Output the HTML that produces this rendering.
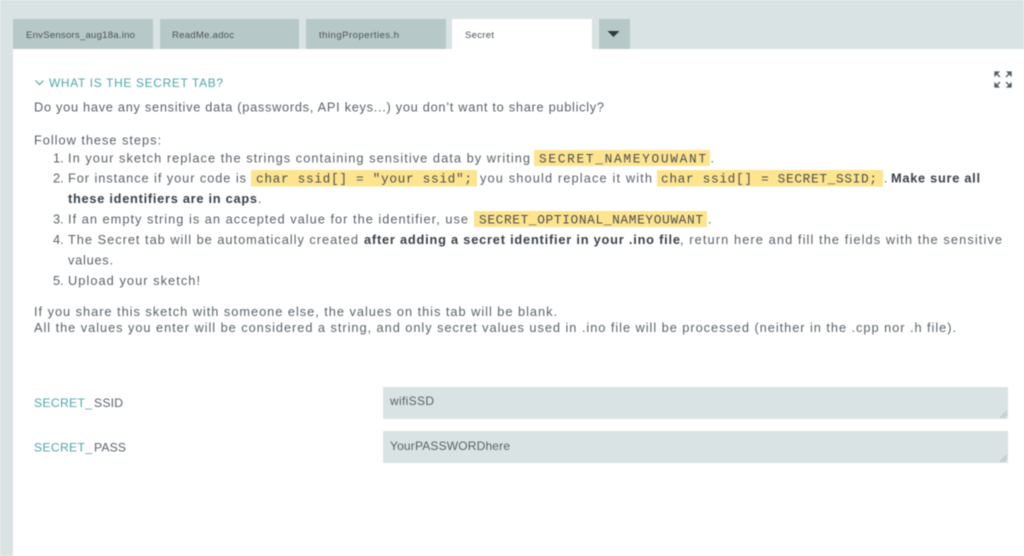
<!DOCTYPE html>
<html><head><meta charset="utf-8"><style>
html,body{margin:0;padding:0;width:1024px;height:556px;overflow:hidden;background:#fff}
svg{display:block;filter:blur(.4px)}
text{font-family:"Liberation Sans",sans-serif;font-size:12.8px;fill:#586369;white-space:pre}
.b{font-weight:700;fill:#374249}
.m{font-family:"Liberation Mono",monospace;font-size:12.8px;fill:#4c5050}
.t{font-size:9.6px;fill:#4a5459}
.l{font-size:12.2px}
.i{font-size:12px}
.h{fill:#fde48f}
.teal{fill:#4fa6a9}
.hd{font-size:11.9px}
</style></head><body>
<svg width="1024" height="556" viewBox="0 0 1024 556" xmlns="http://www.w3.org/2000/svg">
<rect width="1024" height="556" fill="#dae3e3"/>
<rect x="13" y="49" width="1011" height="507" fill="#fff"/>
<!-- tabs -->
<rect x="13" y="19" width="140" height="30" fill="#b7c8c9"/>
<rect x="160" y="19" width="139" height="30" fill="#b7c8c9"/>
<rect x="306" y="19" width="140" height="30" fill="#b7c8c9"/>
<rect x="452" y="19" width="140" height="30" fill="#fff"/>
<rect x="599" y="19" width="31" height="30" fill="#b7c8c9"/>
<path d="M607.500 31H619.500L613.500 37Z" fill="#2e3a40"/>
<text class="t" x="26" y="38" textLength="109">EnvSensors_aug18a.ino</text>
<text class="t" x="172" y="38" textLength="62">ReadMe.adoc</text>
<text class="t" x="319" y="38" textLength="80">thingProperties.h</text>
<text class="t" x="465" y="38" textLength="29">Secret</text>
<!-- heading -->
<path d="M35.500 80.500L39.500 84.500L43.500 80.500" fill="none" stroke="#53a8ab" stroke-width="1.2"/>
<text class="teal hd" x="49" y="87.200" textLength="174">WHAT IS THE SECRET TAB?</text>
<!-- expand icon -->
<g fill="#4f5d64" stroke="#4f5d64" stroke-width="1.3">
<path d="M995 72H998.500L995 75.500ZM995.500 72.500L1000 77" />
<path d="M1011 72H1007.500L1011 75.500ZM1010.500 72.500L1006 77"/>
<path d="M995 87H998.500L995 83.500ZM995.500 86.500L1000 82"/>
<path d="M1011 87H1007.500L1011 83.500ZM1010.500 86.500L1006 82"/>
</g>
<!-- body -->
<text x="34" y="111.500" textLength="570">Do you have any sensitive data (passwords, API keys...) you don’t want to share publicly?</text>
<text x="34" y="144.500" textLength="127">Follow these steps:</text>

<text x="53" y="162.500">1.</text>
<text x="68" y="162.500" textLength="462">In your sketch replace the strings containing sensitive data by writing</text>
<rect class="h" x="534" y="150" width="176" height="16"/>
<text class="m" x="539" y="162.500" textLength="167">SECRET_NAMEYOUWANT</text>
<text x="710.500" y="162.500">.</text>

<text x="53" y="182.500">2.</text>
<text x="68" y="182.500" textLength="178">For instance if your code is</text>
<rect class="h" x="251" y="170" width="226" height="16.500"/>
<text class="m" x="256" y="182.500" textLength="216">char ssid[] = "your ssid";</text>
<text x="480" y="182.500" textLength="172">you should replace it with</text>
<rect class="h" x="657" y="170" width="226" height="16.500"/>
<text class="m" x="661" y="182.500" textLength="216">char ssid[] = SECRET_SSID;</text>
<text x="884" y="182.500">.</text>
<text class="b" x="891" y="182.500" textLength="89">Make sure all</text>

<text class="b" x="68" y="203" textLength="189">these identifiers are in caps</text>
<text x="258" y="203">.</text>

<text x="53" y="223.500">3.</text>
<text x="68" y="223.500" textLength="400">If an empty string is an accepted value for the identifier, use</text>
<rect class="h" x="474" y="211" width="233" height="16"/>
<text class="m" x="479" y="223.500" textLength="224">SECRET_OPTIONAL_NAMEYOUWANT</text>
<text x="708" y="223.500">.</text>

<text x="53" y="244">4.</text>
<text x="68" y="244" textLength="290">The Secret tab will be automatically created</text>
<text class="b" x="364" y="244" textLength="316">after adding a secret identifier in your .ino file</text>
<text x="680" y="244" textLength="322">, return here and fill the fields with the sensitive</text>
<text x="68" y="264.500" textLength="45">values.</text>
<text x="53" y="285">5.</text>
<text x="68" y="285" textLength="132">Upload your sketch!</text>

<text x="34" y="316" textLength="523">If you share this sketch with someone else, the values on this tab will be blank.</text>
<text x="34" y="332" textLength="922">All the values you enter will be considered a string, and only secret values used in .ino file will be processed (neither in the .cpp nor .h file).</text>

<!-- fields -->
<text class="teal l" x="34" y="407" textLength="58">SECRET_</text>
<text class="l" x="94" y="407" textLength="29">SSID</text>
<text class="teal l" x="34" y="451.500" textLength="58">SECRET_</text>
<text class="l" x="94" y="451.500" textLength="32">PASS</text>
<rect x="383" y="387" width="625" height="32" rx="1" fill="#dae3e3"/>
<rect x="383" y="431" width="625" height="32" rx="1" fill="#dae3e3"/>
<text class="i" x="390" y="405" textLength="44">wifiSSD</text>
<text class="i" x="390" y="450" textLength="120">YourPASSWORDhere</text>
<g stroke="#a9b5b5" stroke-width=".8">
<path d="M1000 418L1007 411M1003 418L1007 414"/>
<path d="M1000 462L1007 455M1003 462L1007 458"/>
</g>
</svg>
</body></html>
